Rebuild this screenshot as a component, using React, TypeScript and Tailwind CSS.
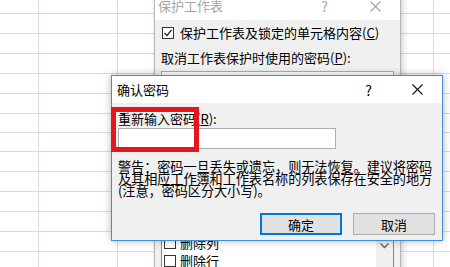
import React from 'react';

const rowHeights = [14, 20, 20, 20, 20, 20, 19, 19, 20, 20, 20, 20, 20, 20];
const colWidths = [39, 79, 79, 79, 79, 79, 79];

function CloseGlyph({ color }: { color: string }) {
  return (
    <svg width="11" height="11" viewBox="0 0 11 11">
      <path d="M0.5 0.5 L10.5 10.5 M10.5 0.5 L0.5 10.5" stroke={color} strokeWidth="1.1" fill="none" />
    </svg>
  );
}

function Box({ checked }: { checked?: boolean }) {
  return (
    <span className="flex h-[12px] w-[12px] shrink-0 items-center justify-center border border-[#333333] bg-white">
      {checked && (
        <svg width="10" height="10" viewBox="0 0 10 10">
          <path d="M1.5 5 L4 7.5 L8.5 2" stroke="#222222" strokeWidth="1.2" fill="none" />
        </svg>
      )}
    </span>
  );
}

function Sheet() {
  return (
    <div className="absolute inset-0">
      <div className="flex flex-col">
        {rowHeights.map((h, i) => (
          <div key={i} className="border-b border-[#d5dae4]" style={{ height: h }} />
        ))}
      </div>
      <div className="absolute inset-0 flex">
        {colWidths.map((w, i) => (
          <div key={i} className="h-full shrink-0 border-r border-[#d5dae4]" style={{ width: w }} />
        ))}
      </div>
    </div>
  );
}

function ProtectSheetDialog() {
  return (
    <div className="absolute left-[154px] top-[-5px] flex h-[290px] w-[247px] flex-col border border-[#b4b4b4] bg-[#f0f0f0] shadow-[2px_0_6px_rgba(0,0,0,0.18)]">
      <div className="flex h-[32px] items-end bg-white pb-[6px] pl-[3px] text-[13px] leading-[16px] text-[#a6a6a6]">
        <span>保护工作表</span>
        <span className="ml-auto mr-[42px] text-[14px]">?</span>
        <span className="mb-[2px] mr-[19px]">
          <CloseGlyph color="#a6a6a6" />
        </span>
      </div>
      <div className="flex flex-col px-[6px] pt-[6px] text-[13px] leading-[16px] text-black">
        <div className="flex h-[14px] items-center gap-[6px] pl-[1px]">
          <Box checked />
          <span>
            保护工作表及锁定的单元格内容(<span className="underline">C</span>)
          </span>
        </div>
        <div className="mt-[11px] flex h-[14px] items-center">
          取消工作表保护时使用的密码(<span className="underline">P</span>):
        </div>
        <div className="mt-[6px] h-[21px] border border-[#abadb3] bg-white" />
        <div className="mt-[10px] h-[16px]">
          允许此工作表的所有用户进行(<span className="underline">O</span>):
        </div>
        <div className="mt-[6px] flex h-[160px] border border-[#828790] bg-white pl-[2px]">
          <div className="flex flex-1 flex-col gap-[6px] pt-[4px]">
            {['设置单元格格式', '设置列格式', '设置行格式', '插入列', '插入行', '插入超链接', '删除列', '删除行'].map(
              (t) => (
                <div key={t} className="flex h-[12px] items-center gap-[4px]">
                  <Box />
                  <span>{t}</span>
                </div>
              ),
            )}
          </div>
          <div className="flex w-[17px] flex-col items-center justify-end bg-[#f0f0f0]">
            <svg width="9" height="6" viewBox="0 0 9 6" className="mb-[34px]">
              <path d="M0.5 0.5 L4.5 4.5 L8.5 0.5" stroke="#606060" strokeWidth="1.3" fill="none" />
            </svg>
          </div>
        </div>
      </div>
    </div>
  );
}

function ConfirmDialog() {
  return (
    <div className="absolute left-[111px] top-[75px] flex h-[166px] w-[332px] flex-col border border-[#3d8fd9] bg-[#f0f0f0] shadow-[0_0_8px_rgba(0,0,0,0.28)]">
      <div className="flex h-[27px] items-center bg-white pl-[5px] text-[13px] leading-[16px] text-black">
        <span>确认密码</span>
        <span className="ml-auto mr-[40px] text-[14px]">?</span>
        <span className="mr-[19px]">
          <CloseGlyph color="#111111" />
        </span>
      </div>
      <div className="flex flex-1 flex-col pl-[6px] pr-[6px] text-[13px] text-black">
        <div className="mt-[8px] h-[16px] leading-[16px]">
          重新输入密码(<span className="underline">R</span>):
        </div>
        <div className="mt-[1px] h-[21px] w-[218px] border border-[#abadb3] bg-white" />
        <p className="mt-[12px] w-[322px] text-[13.2px] leading-[12px] tracking-[-0.1px]">
          警告：密码一旦丢失或遗忘，则无法恢复。建议将密码及其相应工作簿和工作表名称的列表保存在安全的地方(注意，密码区分大小写)。
        </p>
        <div className="mt-[16px] flex justify-end gap-[11px] pr-[1px]">
          <button className="flex h-[22px] w-[82px] items-center justify-center border-2 border-[#0078d7] bg-[#e1e1e1] text-[13px] leading-none">
            确定
          </button>
          <button className="flex h-[22px] w-[82px] items-center justify-center border border-[#adadad] bg-[#e1e1e1] text-[13px] leading-none">
            取消
          </button>
        </div>
      </div>
    </div>
  );
}

export default function App() {
  return (
    <div className="relative h-[267px] w-[450px] overflow-hidden bg-white font-['Noto_Sans_CJK_SC','Liberation_Sans',sans-serif]">
      <Sheet />
      <ProtectSheetDialog />
      <ConfirmDialog />
      <div className="pointer-events-none absolute left-[111px] top-[107px] h-[45px] w-[88px] border-[5px] border-[#e5161e]" />
    </div>
  );
}
